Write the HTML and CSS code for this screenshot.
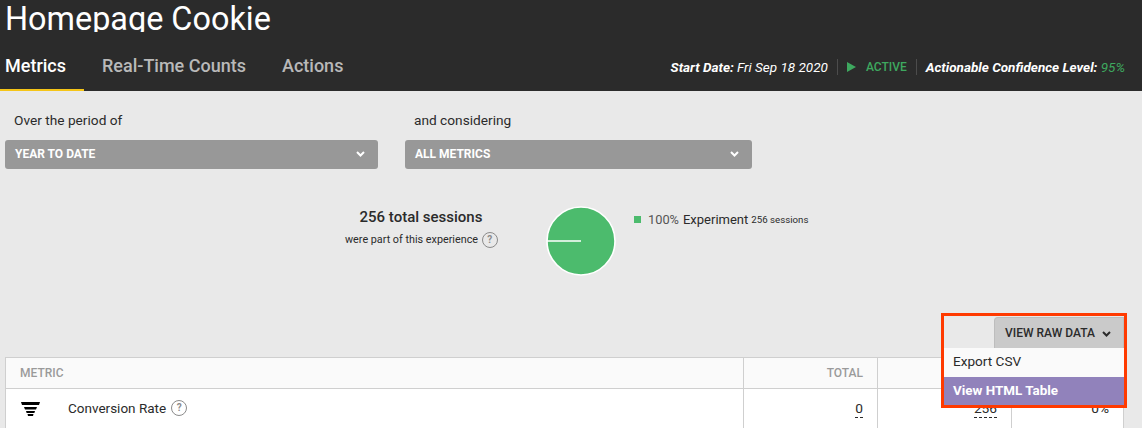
FILE: index.html
```html
<!DOCTYPE html>
<html lang="en">
<head>
    <meta charset="UTF-8">
    <title>Homepage Cookie</title>
    <link rel="stylesheet" href="styles.css">
</head>
<body>
    <header class="page-header">
        <div class="title-clip">
            <h1>Homepage Cookie</h1>
        </div>
        <div class="header-row">
            <nav class="tabs">
                <a class="tab tab-active">Metrics</a>
                <a class="tab">Real-Time Counts</a>
                <a class="tab">Actions</a>
            </nav>
            <div class="status-line">
                <span class="status-item"><b>Start Date:</b> Fri Sep 18 2020</span>
                <span class="status-item status-active">
                    <svg class="play-icon" width="9" height="10" viewBox="0 0 9 10"><path d="M0 0 L9 5 L0 10 Z"/></svg>
                    ACTIVE
                </span>
                <span class="status-item status-last"><b>Actionable Confidence Level:</b> <span class="green">95%</span></span>
            </div>
        </div>
    </header>

    <section class="filters">
        <div class="filter filter-period">
            <label>Over the period of</label>
            <div class="select">
                <span>YEAR TO DATE</span>
                <svg class="chevron" width="9" height="6" viewBox="0 0 9 6"><path d="M1 1 L4.5 4.5 L8 1"/></svg>
            </div>
        </div>
        <div class="filter filter-metrics">
            <label>and considering</label>
            <div class="select">
                <span>ALL METRICS</span>
                <svg class="chevron" width="9" height="6" viewBox="0 0 9 6"><path d="M1 1 L4.5 4.5 L8 1"/></svg>
            </div>
        </div>
    </section>

    <section class="summary">
        <div class="summary-text">
            <div class="summary-total">256 total sessions</div>
            <div class="summary-sub">were part of this experience <span class="help help-grey">?</span></div>
        </div>
        <svg class="pie" width="70" height="70" viewBox="0 0 70 70">
            <circle cx="35" cy="35" r="34" fill="#4cbb6d" stroke="#fff" stroke-width="1.6"/>
            <line x1="1" y1="35" x2="35" y2="35" stroke="#fff" stroke-width="1.4"/>
        </svg>
        <div class="legend">
            <span class="legend-dot"></span>
            <span class="legend-pct">100%</span>
            <span class="legend-name">Experiment</span>
            <span class="legend-count">256 sessions</span>
        </div>
    </section>

    <div class="raw-row">
        <button class="raw-btn">VIEW RAW DATA
            <svg class="chevron chevron-dark" width="9" height="6" viewBox="0 0 9 6"><path d="M1 1 L4.5 4.5 L8 1"/></svg>
        </button>
        <ul class="raw-menu">
            <li>Export CSV</li>
            <li class="raw-selected">View HTML Table</li>
        </ul>
        <div class="highlight"></div>
    </div>

    <table class="metrics">
        <thead>
            <tr>
                <th class="col-metric">METRIC</th>
                <th class="col-num">TOTAL</th>
                <th class="col-num"></th>
                <th class="col-pct"></th>
            </tr>
        </thead>
        <tbody>
            <tr>
                <td class="col-metric">
                    <div class="metric-name">
                        <svg class="funnel" width="19" height="14" viewBox="0 0 19 14">
                            <path d="M0 0 H19 L18 3 H1 Z"/>
                            <path d="M3 5 H16 L15 7.4 H4 Z"/>
                            <path d="M5 9 H14 L13.4 11 H5.6 Z"/>
                            <path d="M6.5 12 H12.5 L12 14 H7 Z"/>
                        </svg>
                        <span>Conversion Rate</span>
                        <span class="help">?</span>
                    </div>
                </td>
                <td class="col-num"><span class="dashed">0</span></td>
                <td class="col-num"><span class="dashed">256</span></td>
                <td class="col-pct">0%</td>
            </tr>
        </tbody>
    </table>
</body>
</html>
```

FILE: styles.css
```css
html, body {
    height: 428px;
    overflow: hidden;
}

body {
    margin: 0;
    background: #e9e9e9;
    color: #2b2b2b;
    font-family: Roboto, 'Liberation Sans', sans-serif;
    font-size: 13.7px;
}

.page-header {
    height: 91px;
    background: #2b2b2b;
    color: #fff;
}

.title-clip {
    height: 32px;
    overflow: hidden;
}

h1 {
    margin: 0;
    padding-left: 5px;
    font-size: 32.4px;
    font-weight: 400;
    line-height: 38px;
}

.header-row {
    display: flex;
    justify-content: space-between;
    height: 59px;
}

.tabs {
    display: flex;
}

.tab {
    height: 57px;
    padding: 0 18px;
    font-size: 18px;
    font-weight: 500;
    line-height: 68px;
    color: #b9b9b9;
    border-bottom: 2px solid transparent;
}

.tab-active {
    padding: 0 18px 0 5px;
    color: #fff;
    border-bottom-color: #f5c518;
}

.status-line {
    display: flex;
    align-items: center;
    height: 14px;
    margin-top: 28px;
    padding-right: 17px;
    font-size: 13.5px;
    font-style: italic;
}

.status-line b {
    font-size: 13.5px;
    font-weight: 700;
}

.status-item {
    padding-right: 9px;
    border-right: 1px solid #4c4c4c;
    margin-right: 9px;
    line-height: 16px;
}

.status-active {
    display: flex;
    align-items: center;
    gap: 10px;
    font-size: 12px;
    font-style: normal;
    font-weight: 500;
    color: #3ea85f;
}

.status-last {
    padding-right: 0;
    margin-right: 0;
    border-right: 0;
}

.play-icon {
    fill: #3ea85f;
}

.green {
    font-weight: 400;
    color: #3ea85f;
}

.filters {
    display: flex;
    padding: 20px 0 0 5px;
    gap: 27px;
}

.filter label {
    display: block;
    height: 29px;
    padding-left: 9px;
    line-height: 18px;
}

.filter-period {
    width: 373px;
}

.filter-metrics {
    width: 347px;
}

.select {
    display: flex;
    justify-content: space-between;
    align-items: center;
    height: 27px;
    padding: 0 13px 2px 10px;
    background: #989898;
    border-radius: 3px;
    color: #fff;
    font-size: 12px;
    font-weight: 700;
}

.chevron {
    fill: none;
    stroke: #fff;
    stroke-width: 2;
}

.chevron-dark {
    margin-left: 4px;
    stroke: #2b2b2b;
}

.summary {
    display: flex;
    height: 70px;
    margin-top: 37px;
    padding-left: 345px;
}

.summary-text {
    width: 152px;
    margin-right: 49px;
    padding-top: 2px;
    text-align: center;
}

.summary-total {
    font-size: 15px;
    font-weight: 500;
    line-height: 18px;
}

.summary-sub {
    margin-top: 6px;
    font-size: 10.8px;
    line-height: 16px;
    white-space: nowrap;
}

.help {
    display: inline-block;
    width: 14px;
    height: 14px;
    margin-left: 1px;
    border: 1px solid #8b8b8b;
    border-radius: 50%;
    color: #8b8b8b;
    font-size: 10px;
    font-weight: 700;
    line-height: 14px;
    text-align: center;
    vertical-align: middle;
}

.pie {
    flex: none;
}

.legend {
    display: flex;
    align-items: center;
    height: 14px;
    margin: 6px 0 0 18px;
    white-space: nowrap;
}

.legend-dot {
    width: 7px;
    height: 7px;
    margin-right: 7px;
    background: #4cbb6d;
}

.legend-pct {
    margin-right: 4px;
    font-size: 12.8px;
    color: #555;
}

.legend-name {
    margin-right: 3px;
    font-size: 13px;
}

.legend-count {
    font-size: 9.7px;
}

.raw-row {
    position: relative;
    display: flex;
    justify-content: flex-end;
    height: 81px;
    padding: 41px 18px 0 0;
    box-sizing: border-box;
}

.raw-btn {
    width: 130px;
    height: 31px;
    padding: 0 2px 0 0;
    background: #cacaca;
    border: 1px solid #bdbdbd;
    border-bottom: 0;
    border-radius: 4px 0 0 0;
    color: #2b2b2b;
    font-family: inherit;
    font-size: 12px;
    font-weight: 500;
}

.raw-menu {
    position: absolute;
    z-index: 2;
    top: 72px;
    right: 18px;
    width: 180px;
    margin: 0;
    padding: 0;
    list-style: none;
    background: #fafafa;
    font-size: 13.6px;
}

.raw-menu li {
    height: 29px;
    padding-left: 9px;
    line-height: 27px;
}

.raw-menu .raw-selected {
    height: 28px;
    background: #9182bb;
    color: #fff;
    font-size: 13.4px;
    font-weight: 700;
}

.highlight {
    position: absolute;
    z-index: 3;
    top: 37px;
    right: 15px;
    width: 180px;
    height: 89px;
    border: 3px solid #ff3a00;
}

.metrics {
    width: 1119px;
    margin-left: 5px;
    border-collapse: collapse;
    table-layout: fixed;
    background: #fff;
}

.metrics th, .metrics td {
    box-sizing: border-box;
    border: 1px solid #cfcfcf;
}

.metrics th {
    height: 31px;
    padding: 0 14px;
    background: #fafafa;
    color: #9a9a9a;
    font-size: 12px;
    font-weight: 500;
    text-align: right;
}

.metrics td {
    height: 40px;
    padding: 0 14px;
    text-align: right;
    vertical-align: top;
    line-height: 38px;
}

.metrics .col-metric {
    width: 738px;
    text-align: left;
}

.metrics .col-num {
    width: 134px;
}

.metric-name {
    display: flex;
    align-items: center;
    height: 38px;
    font-size: 13.5px;
}

.funnel {
    margin: 2px 28px 0 1px;
    flex: none;
}

.metric-name .help {
    margin-left: 5px;
}

.dashed {
    border-bottom: 1px dashed #2b2b2b;
    padding-bottom: 1px;
}
```
